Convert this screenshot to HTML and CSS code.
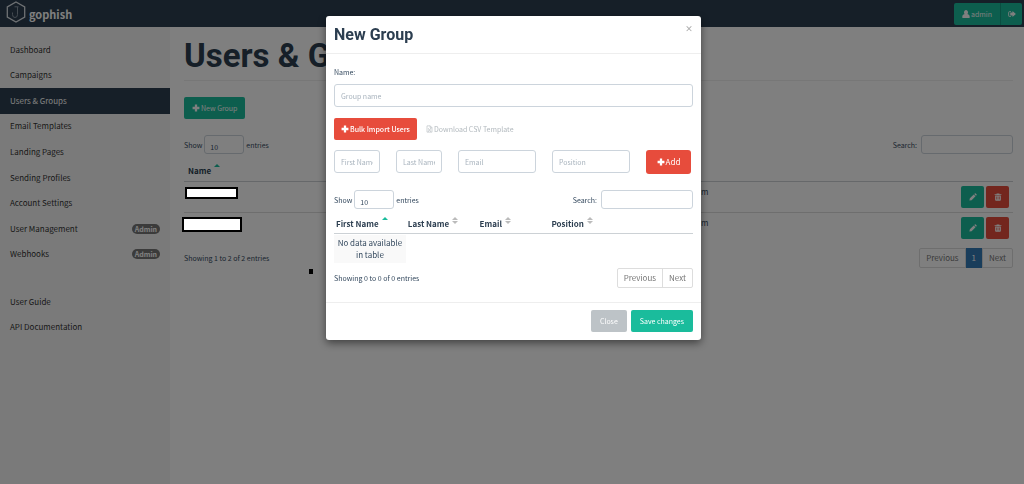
FILE: index.html
```html
<!DOCTYPE html>
<html lang="en">
<head>
<meta charset="utf-8">
<title>Users &amp; Groups - gophish</title>
<link rel="stylesheet" href="styles.css">
</head>
<body>
<svg class="sprite" aria-hidden="true">
  <symbol id="plus" viewBox="0 0 14 14"><path d="M5 1h4v4h4v4H9v4H5V9H1V5h4z"/></symbol>
  <symbol id="user" viewBox="0 0 14 14"><path d="M7 0a3.4 4 0 0 1 2.200 7.100C12.500 7.500 13.500 10 13.500 12.500q0 1.500-1.500 1.500H2Q.5 14 .5 12.500C.5 10 1.500 7.500 4.800 7.100A3.400 4 0 0 1 7 0z"/></symbol>
  <symbol id="signout" viewBox="0 0 16 14"><path d="M6 1.500v1.700H3.500Q2.200 3.200 2.200 4.500v5q0 1.300 1.300 1.300H6v1.700H3.500Q.5 12.500.5 9.500v-5q0-3 3-3zM9 1l6.800 6L9 13V9.800H4.500V4.200H9z"/></symbol>
  <symbol id="pencil" viewBox="0 0 14 14"><path d="M.7 13.300l.8-3.900L8.300 2.600l3.100 3.100-6.800 6.800zM9.200 1.700l1-1q.8-.6 1.600.2l1.400 1.400q.7.800 0 1.500l-1 1z"/></symbol>
  <symbol id="trash" viewBox="0 0 14 14"><path fill-rule="evenodd" d="M4.500 2V.700h5V2H13v1.600H1V2zM2 4.200h10V12q0 1.500-1.500 1.500h-7Q2 13.500 2 12zM4.200 6v5.500h1V6zm2.300 0v5.500h1V6zm2.300 0v5.500h1V6z"/></symbol>
  <symbol id="file" viewBox="0 0 14 14"><path fill="none" stroke="currentColor" stroke-width="1.200" d="M2 .7h6.500L12 4.200v9.100H2zM8.300.7v3.800H12M4.800 6.500l4.200 5M9 6.500l-4.200 5M4 6.500h2M8 11.500h2M8 6.500h2M4 11.500h2"/></symbol>
</svg>

<header class="navbar">
  <a class="brand" href="#">
    <svg class="logo" viewBox="0 0 20 22" aria-hidden="true"><path d="M10 1l8.700 5v10L10 21l-8.700-5V6z" fill="none" stroke="#dde3e8" stroke-width="1.300"/><path d="M8.500 5.800h4M11.500 6v7.500q0 3-2.500 3t-2.500-3M6.500 13.500v-2" fill="none" stroke="#8a98a5" stroke-width="1"/></svg>
    <span>gophish</span>
  </a>
  <div class="account">
    <button class="btn teal" type="button"><svg class="icon"><use href="#user"/></svg>admin</button><button class="btn teal signout" type="button" aria-label="Sign out"><svg class="icon"><use href="#signout"/></svg></button>
  </div>
</header>

<div class="layout">
  <nav class="sidebar">
    <ul class="menu">
      <li><a href="#">Dashboard</a></li>
      <li><a href="#">Campaigns</a></li>
      <li><a href="#" class="active">Users &amp; Groups</a></li>
      <li><a href="#">Email Templates</a></li>
      <li><a href="#">Landing Pages</a></li>
      <li><a href="#">Sending Profiles</a></li>
      <li><a href="#">Account Settings</a></li>
      <li><a href="#">User Management <span class="badge">Admin</span></a></li>
      <li><a href="#">Webhooks <span class="badge">Admin</span></a></li>
    </ul>
    <ul class="menu help">
      <li><a href="#">User Guide</a></li>
      <li><a href="#">API Documentation</a></li>
    </ul>
  </nav>

  <main class="content">
    <h1>Users &amp; Groups</h1>
    <button class="btn teal" type="button"><svg class="icon"><use href="#plus"/></svg>New Group</button>
    <div class="controls page-controls">
      <label>Show <select><option>10</option></select> entries</label>
      <label>Search: <input type="search"></label>
    </div>
    <table class="groups">
      <thead><tr><th class="name">Name<span class="sort up"></span></th><th></th><th></th></tr></thead>
      <tbody>
        <tr><td><span class="mask"></span></td><td>m</td><td class="actions"><button class="btn teal square" type="button" aria-label="Edit"><svg class="icon"><use href="#pencil"/></svg></button><button class="btn red square" type="button" aria-label="Delete"><svg class="icon"><use href="#trash"/></svg></button></td></tr>
        <tr><td><span class="mask large"></span></td><td>m</td><td class="actions"><button class="btn teal square" type="button" aria-label="Edit"><svg class="icon"><use href="#pencil"/></svg></button><button class="btn red square" type="button" aria-label="Delete"><svg class="icon"><use href="#trash"/></svg></button></td></tr>
      </tbody>
    </table>
    <div class="summary page-summary">
      <span>Showing 1 to 2 of 2 entries</span>
      <div class="pager"><a href="#">Previous</a><a href="#" class="current">1</a><a href="#">Next</a></div>
    </div>
    <span class="speck"></span>
  </main>
</div>

<div class="backdrop">
  <section class="modal" role="dialog" aria-labelledby="modal-title">
    <header class="modal-head">
      <h2 id="modal-title">New Group</h2>
      <button class="close" type="button" aria-label="Dismiss">×</button>
    </header>
    <div class="modal-body">
      <label class="field-label" for="group-name">Name:</label>
      <input id="group-name" class="field" type="text" placeholder="Group name">
      <div class="import">
        <button class="btn red bulk" type="button"><svg class="icon"><use href="#plus"/></svg>Bulk Import Users</button>
        <a href="#" class="template"><svg class="icon"><use href="#file"/></svg>Download CSV Template</a>
      </div>
      <form class="target">
        <input class="field" type="text" placeholder="First Name" aria-label="First Name">
        <input class="field" type="text" placeholder="Last Name" aria-label="Last Name">
        <input class="field" type="text" placeholder="Email" aria-label="Email">
        <input class="field" type="text" placeholder="Position" aria-label="Position">
        <button class="btn red add" type="button"><svg class="icon"><use href="#plus"/></svg>Add</button>
      </form>
      <div class="controls">
        <label>Show <select><option>10</option></select> entries</label>
        <label>Search: <input type="search"></label>
      </div>
      <table class="targets">
        <thead><tr><th>First Name<span class="sort up"></span></th><th>Last Name<span class="sort both"></span></th><th>Email<span class="sort both"></span></th><th>Position<span class="sort both"></span></th><th></th></tr></thead>
        <tbody><tr><td>No data available in table</td></tr></tbody>
      </table>
      <div class="summary">
        <span>Showing 0 to 0 of 0 entries</span>
        <div class="pager"><a href="#">Previous</a><a href="#">Next</a></div>
      </div>
    </div>
    <footer class="modal-foot">
      <button class="btn gray" type="button">Close</button>
      <button class="btn teal" type="button">Save changes</button>
    </footer>
  </section>
</div>
</body>
</html>
```
FILE: styles.css
```css
* { box-sizing: border-box; }
body {
  margin: 0;
  min-height: 100vh;
  display: flex;
  flex-direction: column;
  background: #fff;
  color: #34495e;
  font: 7px/12px "Noto Sans CJK SC", "Open Sans", sans-serif;
}
a { color: inherit; text-decoration: none; }
button, input, select { font: inherit; color: inherit; margin: 0; }
h1, h2, ul { margin: 0; padding: 0; }
ul { list-style: none; }
.sprite { position: absolute; width: 0; height: 0; }
.icon { width: 8px; height: 8px; fill: currentColor; flex: none; }

.btn {
  display: inline-flex;
  align-items: center;
  justify-content: center;
  gap: 1px;
  height: 22px;
  padding: 0 8px;
  border: 0;
  border-radius: 2px;
  color: #fff;
  white-space: nowrap;
}
.teal { background: #1abc9c; }
.red { background: #e74c3c; }
.gray { background: #bdc3c7; }
.square { width: 23px; padding: 0; }

.navbar {
  display: flex;
  justify-content: space-between;
  align-items: center;
  height: 27px;
  padding: 0 2px 0 6px;
  background: #2c3e50;
}
.brand {
  display: flex;
  align-items: center;
  gap: 3px;
  color: #fff;
  font-size: 11px;
  font-weight: 700;
}
.logo { width: 20px; height: 22px; margin-bottom: 3px; }
.account { display: flex; }
.account .btn { border-radius: 2px 0 0 2px; }
.account .signout {
  width: 22px;
  padding: 0;
  border-left: 1px solid #149c82;
  border-radius: 0 2px 2px 0;
}

.layout { display: flex; flex: 1; }
.sidebar { flex: none; width: 170px; padding-top: 10px; background: #f5f5f5; font-size: 8px; }
.menu { display: flex; flex-direction: column; height: 230px; }
.menu.help { height: 51px; margin-top: 22px; }
.menu li { flex: 1; display: flex; }
.menu a {
  flex: 1;
  display: flex;
  align-items: center;
  justify-content: space-between;
  padding: 0 10px;
  color: #333;
}
.menu .active { background: #2c3e50; color: #fff; }
.badge {
  padding: 0 3px;
  border-radius: 5px;
  background: #777;
  color: #fff;
  font-size: 7px;
  font-weight: 700;
  line-height: 10px;
}

.content { flex: 1; padding: 0 11px 0 14px; }
h1 {
  height: 54px;
  margin-bottom: 16px;
  padding-top: 9px;
  border-bottom: 1px solid #eee;
  color: #2c3e50;
  font: 700 33px/40px Roboto, sans-serif;
}
.controls { display: flex; justify-content: space-between; }
.controls label { display: flex; align-items: center; gap: 2px; }
.controls select {
  width: 40px;
  height: 19px;
  padding: 4px 5px 0;
  border: 1px solid #ccd4dc;
  border-radius: 3px;
  background: transparent;
  appearance: none;
}
.controls input {
  width: 92px;
  height: 19px;
  margin-left: 2px;
  border: 1px solid #ccd4dc;
  border-radius: 3px;
  background: transparent;
}
.page-controls { margin-top: 16px; }

table { width: 100%; border-collapse: collapse; table-layout: fixed; font-size: 8px; }
th {
  height: 24px;
  padding: 0 2px 3px;
  border-bottom: 1px solid #ccd1d5;
  color: #2c3e50;
  text-align: left;
  vertical-align: bottom;
  white-space: nowrap;
}
.sort { display: inline-flex; flex-direction: column; gap: 1px; margin: -6px 0 0 3px; vertical-align: 7px; line-height: 0; }
.sort::before, .sort::after {
  content: "";
  border: 3px solid transparent;
  border-top-width: 0;
  border-bottom: 3px solid #bbb;
}
.sort::after { border-top: 3px solid transparent; border-bottom-width: 0; }
.sort.up::before { border-bottom-color: #1abc9c; }
.sort.both::after { border-top-color: #bbb; }

.groups th { height: 27px; padding: 0 4px 4px; }
.groups .name { width: 513px; }
.groups td { height: 31px; padding: 4px; vertical-align: top; border-bottom: 1px solid #ddd; }
.groups tr:last-child td { border-bottom: 0; }
.groups .actions { text-align: right; font-size: 0; }
.actions .btn + .btn { margin-left: 2px; }
.mask {
  position: relative;
  z-index: 20;
  display: block;
  width: 53px;
  height: 12px;
  margin: 1px -3px;
  border: 2px solid #000;
  background: #fff;
}
.mask.large { width: 60px; height: 15px; margin: 0 -6px; }
.speck { position: absolute; z-index: 20; left: 309px; top: 269px; width: 4px; height: 5px; background: #000; }

.summary { display: flex; align-items: center; justify-content: space-between; }
.page-summary { margin-top: 5px; }
.pager { display: flex; border: 1px solid #ddd; border-radius: 2px; font-size: 8px; }
.pager a { padding: 0 6px; color: #777; line-height: 18px; }
.pager a + a { border-left: 1px solid #ddd; }
.pager .current { margin: -1px 0; padding-top: 1px; background: #337ab7; color: #fff; }

.backdrop {
  position: fixed;
  inset: 0;
  z-index: 10;
  display: flex;
  align-items: flex-start;
  justify-content: center;
  padding: 16px 0 0 3px;
  background: rgba(0, 0, 0, .5);
}
.modal {
  width: 375px;
  border-radius: 3px;
  background: #fff;
  box-shadow: 0 3px 8px rgba(0, 0, 0, .5);
}
.modal-head {
  display: flex;
  justify-content: space-between;
  align-items: flex-start;
  padding: 8px 8px 7px;
  border-bottom: 1px solid #eee;
}
.modal-head h2 { color: #2c3e50; font: 700 16px/22px Roboto, sans-serif; }
.close { padding: 0; border: 0; background: none; color: #aaa; font-size: 8px; font-weight: 700; line-height: 10px; }
.modal-body { padding: 12px 8px 14px; }
.field-label { display: block; margin-bottom: 6px; }
.field {
  width: 100%;
  min-width: 0;
  height: 23px;
  padding: 0 6px;
  border: 1px solid #ccd4dc;
  border-radius: 3px;
  background: #fff;
}
.field::placeholder { color: #a8b3bd; opacity: 1; }
.import { display: flex; align-items: center; gap: 9px; margin: 11px 0 10px; }
.bulk { padding: 0 7px; font-weight: 500; }
.template { display: flex; align-items: center; gap: 1px; color: #b2b9be; }
.template .icon { width: 7px; }
.target {
  display: grid;
  grid-template-columns: 46fr 46fr 78fr 78fr 45fr;
  gap: 16px;
  height: 24px;
  margin-bottom: 16px;
  padding-right: 2px;
}
.add { height: 24px; border-radius: 3px; font-size: 8px; }
.targets td { padding: 2px; background: #f9f9f9; text-align: center; }
.targets tbody::before { content: ""; display: block; height: 1px; }
.modal-body .summary { margin-top: 5px; }
.modal-foot {
  display: flex;
  justify-content: flex-end;
  gap: 4px;
  padding: 7px 8px 8px;
  border-top: 1px solid #eee;
}
.modal-foot .btn { padding: 0 9px; }
```
